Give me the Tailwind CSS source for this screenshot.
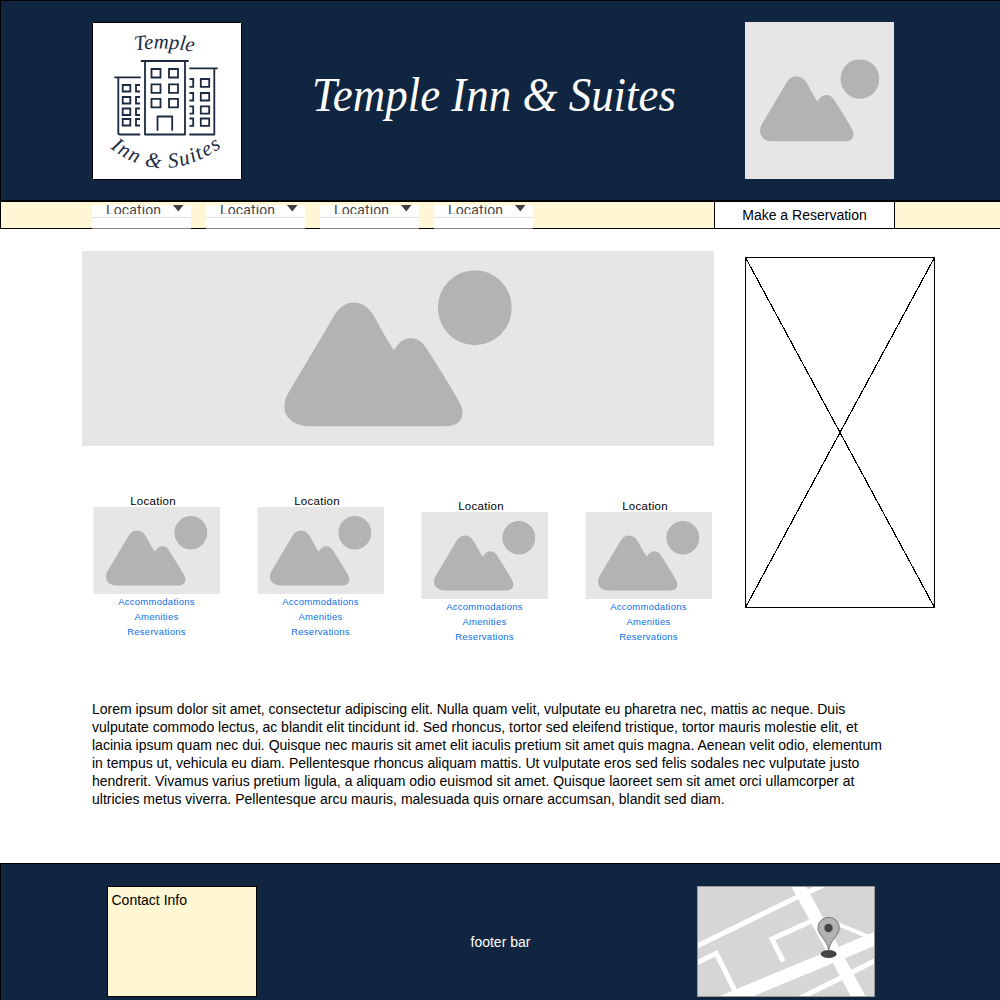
<!DOCTYPE html>
<html lang="en">
<head>
<meta charset="utf-8">
<title>Temple Inn &amp; Suites</title>
<script src="https://cdn.jsdelivr.net/npm/@tailwindcss/browser@4"></script>
</head>
<body class="bg-white text-black font-['Liberation_Sans',Arial,sans-serif] text-sm leading-[18px]">
<svg class="hidden">
  <symbol id="scene" viewBox="43 60 683 469" preserveAspectRatio="none">
    <path fill="#b3b3b3" d="M43 470C43 455 47 440 58 423L185 210C200 178 223 157 252 157C281 157 303 178 318 208C335 240 352 271 372 300C386 277 402 264 423 264C445 264 459 278 470 295C505 349 540 405 570 458C574 466 578 478 578 488C578 515 558 529 520 529H125C75 529 43 505 43 470Z"/>
    <ellipse cx="615" cy="172.500" rx="111" ry="112.500" fill="#b3b3b3"/>
  </symbol>
</svg>
<div class="w-[1000px] h-[1000px] overflow-hidden flex flex-col">
  <header class="h-[201px] shrink-0 bg-[#10253f] border-t border-l border-b border-black flex items-start pl-[91px] pt-[21px]">
    <svg class="w-[150px] h-[158px] shrink-0" viewBox="92 22 150 158">
      <rect x="92.500" y="22.500" width="149" height="157" rx="1" fill="#fff" stroke="#000"/>
      <g fill="none" stroke="#1b2a41" stroke-width="1.800" stroke-linecap="round" stroke-linejoin="round">
        <path d="M141.500 61H188M145 61V134.500H185V61M115 77.300H140M118.300 78V132.500Q118.300 134.500 120 134.500H139.500M190 68.300H217M214.300 69V134.500H190M157.500 130V116.500H172.200V130"/>
        <path stroke-linecap="butt" stroke-linejoin="miter" d="M151.500 69h9v8.500h-9zM169 69h9v8.500h-9zM151.500 84.300h9v8.500h-9zM169 84.300h9v8.500h-9zM151.500 98.800h9v8.500h-9zM169 98.800h9v8.500h-9z"/>
        <path stroke-linecap="butt" stroke-linejoin="miter" d="M122.700 85h7.600v6.500h-7.600zM122.700 97h7.600v6.500h-7.600zM122.700 108.500h7.600v6.500h-7.600zM122.700 119h7.600v6.500h-7.600zM140 85h-4v6.500h4M140 97h-4v6.500h4M140 108.500h-4v6.500h4M140 119h-4v6.500h4"/>
        <path stroke-linecap="butt" stroke-linejoin="miter" d="M200.800 79h8.400v7.800h-8.400zM200.800 93h8.400v7.500h-8.400zM200.800 106.300h8.400v7.300h-8.400zM200.800 118.500h8.400v7.300h-8.400zM189.500 79h3.700v7.800h-3.700M189.500 93h3.700v7.500h-3.700M189.500 106.300h3.700v7.300h-3.700M189.500 118.500h3.700v7.300h-3.700"/>
        <path id="top-arc" stroke="none" d="M135 50.500Q164 46 194 52"/>
        <path id="bottom-arc" stroke="none" d="M110 148Q164 190 226 144"/>
      </g>
      <g fill="#1b2a41" class="font-['Liberation_Serif',serif] italic">
        <text font-size="21" textLength="59" lengthAdjust="spacingAndGlyphs"><textPath href="#top-arc">Temple</textPath></text>
        <text font-size="21" textLength="121" lengthAdjust="spacing"><textPath href="#bottom-arc">Inn &amp; Suites</textPath></text>
      </g>
    </svg>
    <h1 class="ml-[60px] mt-[30px] shrink-0">
      <svg class="w-[390px] h-[80px] block" viewBox="302 52 390 80">
        <text x="312" y="111" textLength="364" lengthAdjust="spacingAndGlyphs" fill="#fff" font-size="49" class="font-['Liberation_Serif',serif] italic">Temple Inn &amp; Suites</text>
      </svg>
    </h1>
    <svg class="ml-[53px] w-[149px] h-[157px] shrink-0 bg-[#e6e6e6]" viewBox="0 0 149 157"><use href="#scene" x="15" y="37.300" width="119.300" height="82.300"/></svg>
  </header>

  <nav class="h-7 shrink-0 bg-[#fff6d3] border-t border-l border-black flex pl-[91px] shadow-[inset_0_-1px_0_#000]">
    <div class="flex gap-[15px] mt-[3px] h-6 w-[622px]">
      <div class="w-[99px] h-6 bg-white border-b border-[#858585]"><div class="h-[13px] border-b border-[#e0e0e0] flex items-start"><span class="ml-[14px] w-[67px] h-[9px] overflow-hidden font-[Roboto,sans-serif] text-[14px] leading-[11px] tracking-[0.12px] text-[#444]">Location</span><svg class="w-[11px] h-[7px]" viewBox="0 0 11 7"><path d="M0 0H10.500L5.300 6.500Z" fill="#404040"/></svg></div></div>
      <div class="w-[99px] h-6 bg-white border-b border-[#858585]"><div class="h-[13px] border-b border-[#e0e0e0] flex items-start"><span class="ml-[14px] w-[67px] h-[9px] overflow-hidden font-[Roboto,sans-serif] text-[14px] leading-[11px] tracking-[0.12px] text-[#444]">Location</span><svg class="w-[11px] h-[7px]" viewBox="0 0 11 7"><path d="M0 0H10.500L5.300 6.500Z" fill="#404040"/></svg></div></div>
      <div class="w-[99px] h-6 bg-white border-b border-[#858585]"><div class="h-[13px] border-b border-[#e0e0e0] flex items-start"><span class="ml-[14px] w-[67px] h-[9px] overflow-hidden font-[Roboto,sans-serif] text-[14px] leading-[11px] tracking-[0.12px] text-[#444]">Location</span><svg class="w-[11px] h-[7px]" viewBox="0 0 11 7"><path d="M0 0H10.500L5.300 6.500Z" fill="#404040"/></svg></div></div>
      <div class="w-[99px] h-6 bg-white border-b border-[#858585]"><div class="h-[13px] border-b border-[#e0e0e0] flex items-start"><span class="ml-[14px] w-[67px] h-[9px] overflow-hidden font-[Roboto,sans-serif] text-[14px] leading-[11px] tracking-[0.12px] text-[#444]">Location</span><svg class="w-[11px] h-[7px]" viewBox="0 0 11 7"><path d="M0 0H10.500L5.300 6.500Z" fill="#404040"/></svg></div></div>
    </div>
    <a class="w-[181px] h-[27px] shrink-0 bg-white border-x border-b border-black text-center leading-[26px]">Make a Reservation</a>
  </nav>

  <main class="h-[634px] shrink-0">
    <div class="flex items-start pl-[82px] pt-[22px] h-[471px]">
      <div class="w-[632px]">
        <svg class="block w-[632px] h-[195px] bg-[#e6e6e6]" viewBox="0 0 632 195"><use href="#scene" x="202.300" y="19.200" width="227.500" height="156.300"/></svg>
        <div class="flex gap-[37px] pl-[11px] pt-[49px] leading-[15px]">
          <section class="w-[127px] shrink-0 text-center">
            <h2 class="text-[11.5px] leading-[12px] tracking-[0.28px] pr-[7px]">Location</h2>
            <svg class="block w-[127px] h-[87px]" viewBox="0 0 127 87"><rect x=".5" width="126.500" height="87.500" fill="#e6e6e6"/><use href="#scene" x="13" y="9" width="101.300" height="69.700"/></svg>
            <div class="text-[9.5px] tracking-[0.27px] text-[#0a70e8]"><p>Accommodations</p><p>Amenities</p><p>Reservations</p></div>
          </section>
          <section class="w-[127px] shrink-0 text-center">
            <h2 class="text-[11.5px] leading-[12px] tracking-[0.28px] pr-[7px]">Location</h2>
            <svg class="block w-[127px] h-[87px]" viewBox="0 0 127 87"><rect x=".5" width="126.500" height="87.500" fill="#e6e6e6"/><use href="#scene" x="13" y="9" width="101.300" height="69.700"/></svg>
            <div class="text-[9.5px] tracking-[0.27px] text-[#0a70e8]"><p>Accommodations</p><p>Amenities</p><p>Reservations</p></div>
          </section>
          <section class="w-[127px] shrink-0 text-center mt-[5px]">
            <h2 class="text-[11.5px] leading-[12px] tracking-[0.28px] pr-[7px]">Location</h2>
            <svg class="block w-[127px] h-[87px]" viewBox="0 0 127 87"><rect x=".5" width="126.500" height="87.500" fill="#e6e6e6"/><use href="#scene" x="13" y="9" width="101.300" height="69.700"/></svg>
            <div class="text-[9.5px] tracking-[0.27px] text-[#0a70e8]"><p>Accommodations</p><p>Amenities</p><p>Reservations</p></div>
          </section>
          <section class="w-[127px] shrink-0 text-center mt-[5px]">
            <h2 class="text-[11.5px] leading-[12px] tracking-[0.28px] pr-[7px]">Location</h2>
            <svg class="block w-[127px] h-[87px]" viewBox="0 0 127 87"><rect x=".5" width="126.500" height="87.500" fill="#e6e6e6"/><use href="#scene" x="13" y="9" width="101.300" height="69.700"/></svg>
            <div class="text-[9.5px] tracking-[0.27px] text-[#0a70e8]"><p>Accommodations</p><p>Amenities</p><p>Reservations</p></div>
          </section>
        </div>
      </div>
      <svg class="ml-[31px] mt-[6px] w-[190px] h-[351px] shrink-0" viewBox="0 0 190 351" fill="none" stroke="#000"><rect x=".5" y=".5" width="189" height="350"/><path shape-rendering="crispEdges" d="M.5 .5L189.500 350.500M189.500 .5L.5 350.500" stroke-width="1.200"/></svg>
    </div>
    <p class="pl-[92px] whitespace-nowrap">Lorem ipsum dolor sit amet, consectetur adipiscing elit. Nulla quam velit, vulputate eu pharetra nec, mattis ac neque. Duis<br>vulputate commodo lectus, ac blandit elit tincidunt id. Sed rhoncus, tortor sed eleifend tristique, tortor mauris molestie elit, et<br>lacinia ipsum quam nec dui. Quisque nec mauris sit amet elit iaculis pretium sit amet quis magna. Aenean velit odio, elementum<br>in tempus ut, vehicula eu diam. Pellentesque rhoncus aliquam mattis. Ut vulputate eros sed felis sodales nec vulputate justo<br>hendrerit. Vivamus varius pretium ligula, a aliquam odio euismod sit amet. Quisque laoreet sem sit amet orci ullamcorper at<br>ultricies metus viverra. Pellentesque arcu mauris, malesuada quis ornare accumsan, blandit sed diam.</p>
  </main>

  <footer class="h-[150px] shrink-0 bg-[#10253f] border-t border-l border-black flex items-start pl-[106px] pt-[22px]">
    <div class="w-[150px] h-[111px] shrink-0 bg-[#fff6d3] border border-black pl-[3.5px] pt-[4px]">Contact Info</div>
    <p class="w-[440px] shrink-0 pt-[47px] text-white"><span class="ml-[213.5px]">footer bar</span></p>
    <svg class="w-[178px] h-[111px] shrink-0" viewBox="36 93 534 333">
      <rect x="36" y="93" width="534" height="333" fill="#d6d6d6"/>
      <g fill="none" stroke="#fff">
        <path stroke-width="15" d="M30 276L350 120L430 84M30 326L94 295L152 412"/>
        <path stroke-width="15" d="M380 198L261 252L292 314"/>
        <circle cx="292" cy="314" r="3.700" stroke-width="7.400"/>
        <path stroke-width="39" d="M335 83L530 443"/>
        <path stroke-width="39" d="M90 450L580 247"/>
        <path stroke-width="15" d="M320 442L475 365L580 312"/>
        <path stroke-width="12" d="M455 206L550 245"/>
      </g>
      <ellipse cx="431" cy="297" rx="24" ry="12" fill="#444"/>
      <path d="M431 286C427 254 399 242 399 218A32 31 0 0 1 463 218C463 242 435 254 431 286Z" fill="#b3b3b3" stroke="#777" stroke-width="3"/>
      <circle cx="430.500" cy="219" r="12.500" fill="#444"/>
      <rect x="37.500" y="94.500" width="531" height="330" fill="none" stroke="#999" stroke-width="3"/>
    </svg>
  </footer>
</div>
</body>
</html>
